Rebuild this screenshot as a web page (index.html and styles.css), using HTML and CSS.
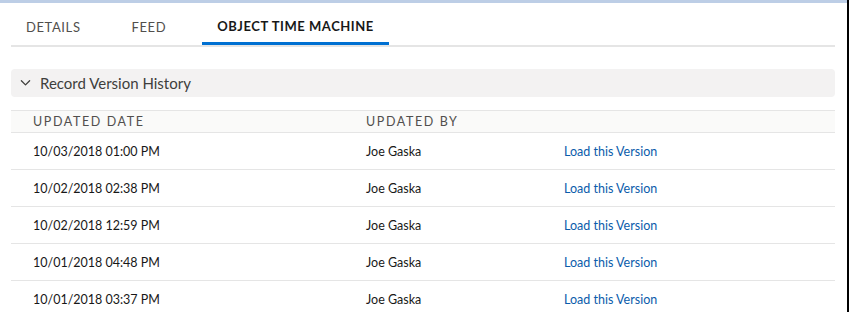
FILE: index.html
```html
<!DOCTYPE html>
<html>
<head>
<meta charset="utf-8">
<link rel="stylesheet" href="styles.css">
</head>
<body>
<div class="page">
  <div class="topstrip"></div>
  <div class="content">
    <nav class="tabs">
      <span class="tab">Details</span>
      <span class="tab">Feed</span>
      <span class="tab active">Object Time Machine</span>
    </nav>
    <div class="section-head">
      <svg class="chevron" viewBox="0 0 12 8" width="11" height="8"><path d="M1.5 1.5 L6 6 L10.5 1.5" fill="none" stroke="#3e3e3c" stroke-width="1.4" stroke-linecap="round" stroke-linejoin="round"/></svg>
      <span class="section-title">Record Version History</span>
    </div>
    <div class="table">
      <div class="row head">
        <span class="c1">Updated Date</span>
        <span class="c2">Updated By</span>
        <span class="c3"></span>
      </div>
      <div class="row">
        <span class="c1">10/03/2018 01:00 PM</span>
        <span class="c2">Joe Gaska</span>
        <span class="c3"><a class="link">Load this Version</a></span>
      </div>
      <div class="row">
        <span class="c1">10/02/2018 02:38 PM</span>
        <span class="c2">Joe Gaska</span>
        <span class="c3"><a class="link">Load this Version</a></span>
      </div>
      <div class="row">
        <span class="c1">10/02/2018 12:59 PM</span>
        <span class="c2">Joe Gaska</span>
        <span class="c3"><a class="link">Load this Version</a></span>
      </div>
      <div class="row">
        <span class="c1">10/01/2018 04:48 PM</span>
        <span class="c2">Joe Gaska</span>
        <span class="c3"><a class="link">Load this Version</a></span>
      </div>
      <div class="row">
        <span class="c1">10/01/2018 03:37 PM</span>
        <span class="c2">Joe Gaska</span>
        <span class="c3"><a class="link">Load this Version</a></span>
      </div>
    </div>
  </div>
</div>
</body>
</html>
```

FILE: styles.css
```css
* { box-sizing: border-box; }
html, body { margin: 0; padding: 0; background: #ffffff; }
body {
  font-family: Lato, "Open Sans", "Liberation Sans", sans-serif;
  color: #080707;
  width: 849px;
  height: 312px;
  overflow: hidden;
}
.page {
  height: 312px;
  border-right: 2px solid #000;
}
.topstrip {
  height: 3px;
  background: #bdcee6;
}
.content {
  padding: 0 12px 0 11px;
}
.tabs {
  display: flex;
  gap: 21px;
  height: 44px;
  border-bottom: 2px solid #e5e5e5;
  align-items: stretch;
}
.tab {
  display: flex;
  align-items: center;
  padding: 7px 15px 0;
  font-size: 13px;
  text-transform: uppercase;
  letter-spacing: 0.6px;
  color: #514f4d;
  border-bottom: 3px solid transparent;
  margin-bottom: -2px;
}
.tab.active {
  color: #181818;
  font-weight: 700;
  letter-spacing: 0.55px;
  border-bottom: 3px solid #0070d2;
  margin-bottom: 0;
}
.section-head {
  margin-top: 22px;
  height: 28px;
  background: #f3f2f2;
  border-radius: 4px;
  display: flex;
  align-items: center;
  padding-left: 9px;
}
.chevron { margin-right: 9px; }
.section-title {
  font-size: 15px;
  color: #3e3e3c;
}
.table {
  margin-top: 13px;
  border-top: 1px solid #e5e5e5;
}
.row {
  display: grid;
  grid-template-columns: 333px 199px 1fr;
  height: 37px;
  align-items: center;
  border-bottom: 1px solid #e5e5e5;
  font-size: 12.5px;
  color: #181818;
}
.row.head {
  height: 22px;
  background: #fafaf9;
  font-size: 12.5px;
  text-transform: uppercase;
  letter-spacing: 1.6px;
  color: #514f4d;
}
.c1 { padding-left: 22px; }
.c2 { padding-left: 22px; }
.c3 { padding-left: 21px; }
.link { color: #0b5cab; text-decoration: none; }
```
